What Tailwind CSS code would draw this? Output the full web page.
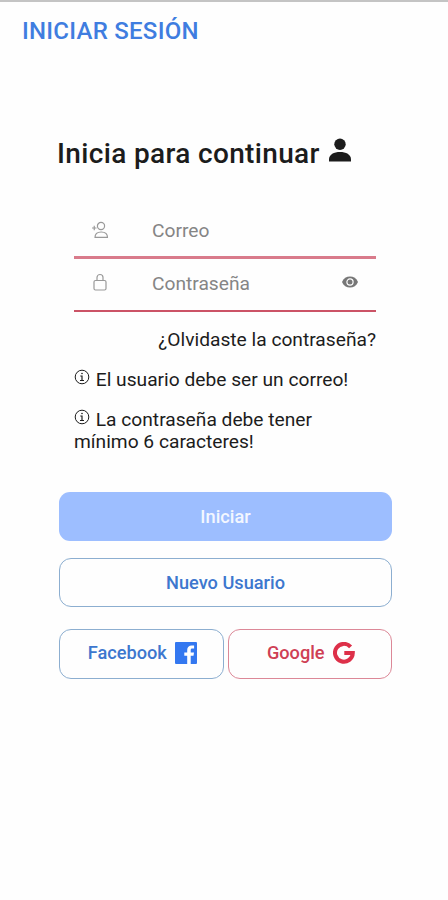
<!DOCTYPE html>
<html lang="es">
  <head>
    <meta charset="UTF-8" />
    <meta name="viewport" content="width=device-width, initial-scale=1.0" />
    <title>Iniciar sesión</title>
    <script src="https://cdn.jsdelivr.net/npm/@tailwindcss/browser@4"></script>
  </head>
  <body class="min-h-screen bg-[#fefefe] font-['Roboto',sans-serif] text-[#1c1c1c]">
    <header class="h-[61px] border-t-2 border-[#c4c4c4] pl-[22px] pt-[11px]">
      <h1 class="text-[24px] leading-9 font-medium tracking-[0.25px] text-[#3f7de0]">INICIAR SESIÓN</h1>
    </header>

    <main class="pt-[73px] pl-[57px] pr-14">
      <h2 class="flex h-10 items-center text-[28px] font-medium tracking-[0.35px] whitespace-nowrap">
        Inicia para continuar
        <svg class="ml-[9px] -mt-2 h-6 w-[22px]" viewBox="0 0 22 24" fill="currentColor">
          <circle cx="11" cy="6.2" r="5.7" />
          <path d="M0 23.5v-2.2C0 16.5 5 14 11 14s11 2.500 11 7.300v2.200z" />
        </svg>
      </h2>

      <form>
        <div class="mt-[32px] ml-[17px] w-[302px]">
          <label class="flex h-[53px] items-center border-b-[3px] border-[#d97b8b] pl-[17px] text-[#858585]">
            <svg class="-mt-[3px] h-[18px] w-[18px]" viewBox="0 0 18 18" fill="none" stroke="#999" stroke-width="1.2" stroke-linejoin="round">
              <circle cx="10" cy="5" r="3.600" />
              <path d="M4 16.400c0-3.700 2.500-5.400 6.200-5.400s6.300 1.700 6.300 5.400zM1 7h4.500M3.250 4.750v4.500" />
            </svg>
            <span class="ml-[43px] text-[19.200px]">Correo</span>
          </label>
          <label class="flex h-[53px] items-center border-b-2 border-[#cb5366] pr-[18px] pl-[17px] text-[#858585]">
            <svg class="-mt-1.5 h-[18px] w-[18px]" viewBox="0 0 18 18" fill="none" stroke="#999" stroke-width="1.2" stroke-linejoin="round">
              <rect x="3" y="7.500" width="12" height="9.500" rx="1.500" />
              <path d="M6 7.500V4.500a3 3 0 0 1 6 0v3" />
            </svg>
            <span class="ml-[43px] text-[19.200px]">Contraseña</span>
            <svg class="-mt-[5px] ml-auto h-3 w-4" viewBox="0 0 16 12">
              <path d="M0 6C1.500 2.300 4.500.5 8 .5S14.500 2.300 16 6c-1.500 3.700-4.500 5.500-8 5.500S1.500 9.700 0 6z" fill="#777" />
              <circle cx="8" cy="6" r="3.100" fill="#777" stroke="#fff" stroke-width="1.200" />
            </svg>
          </label>

          <p class="mt-[17px] text-right text-[19.200px] leading-[22px] whitespace-nowrap">¿Olvidaste la contraseña?</p>
          <p class="mt-[18px] text-[19.200px] leading-[22px] whitespace-nowrap">
            <svg class="mr-px -mt-2 inline h-4 w-4" viewBox="0 0 16 16" fill="none" stroke="currentColor" stroke-width="1">
              <circle cx="8" cy="8" r="6.800" />
              <path d="M6.300 7H8v4.500M6 11.500h4" stroke-width="1.200" />
              <circle cx="8" cy="4.500" r=".8" fill="currentColor" stroke="none" />
            </svg>
            El usuario debe ser un correo!
          </p>
          <p class="mt-[18px] text-[19.200px] leading-[22px] whitespace-nowrap">
            <svg class="mr-px -mt-2 inline h-4 w-4" viewBox="0 0 16 16" fill="none" stroke="currentColor" stroke-width="1">
              <circle cx="8" cy="8" r="6.800" />
              <path d="M6.300 7H8v4.500M6 11.500h4" stroke-width="1.200" />
              <circle cx="8" cy="4.500" r=".8" fill="currentColor" stroke="none" />
            </svg>
            La contraseña debe tener<br />mínimo 6 caracteres!
          </p>
        </div>

        <div class="mt-[39px] ml-0.5 w-[333px] text-[18.200px] font-medium">
          <button type="submit" class="block h-[49px] w-full rounded-[11px] bg-[#9dbeff] text-[#f3f7ff]">Iniciar</button>
          <button type="button" class="mt-[17px] block h-[49px] w-full rounded-[12px] border border-[#8caed0] text-[#3d77ce]">Nuevo Usuario</button>
          <div class="mt-[22px] grid grid-cols-2 gap-1">
            <button type="button" class="flex h-[50px] items-center justify-center rounded-[12px] border border-[#8caed0] pb-0.5 pl-0.5 text-[#3d77ce]">
              Facebook
              <svg class="ml-2 h-[22px] w-[22px]" viewBox="0 0 22 22">
                <rect width="22" height="22" rx="1" fill="#3478f0" />
                <path d="M12.200 22v-8.300H9.300v-3.300h2.900V8c0-3 1.800-4.600 4.500-4.600 1.200 0 2 .1 2.400.2v3h-1.700c-1.400 0-1.700.7-1.700 1.700v2.100H19l-.5 3.300h-2.800V22z" fill="#fff" />
              </svg>
            </button>
            <button type="button" class="flex h-[50px] items-center justify-center rounded-[12px] border border-[#dc8897] pb-0.5 pl-0.5 text-[#cf4055]">
              Google
              <svg class="ml-2 h-[22px] w-[22px]" viewBox="0 0 22 22" fill="none" stroke="#dd3049" stroke-width="4">
                <path d="M17.600 4.900A8.900 8.900 0 1 0 19.800 11H11.300" />
              </svg>
            </button>
          </div>
        </div>
      </form>
    </main>
  </body>
</html>
